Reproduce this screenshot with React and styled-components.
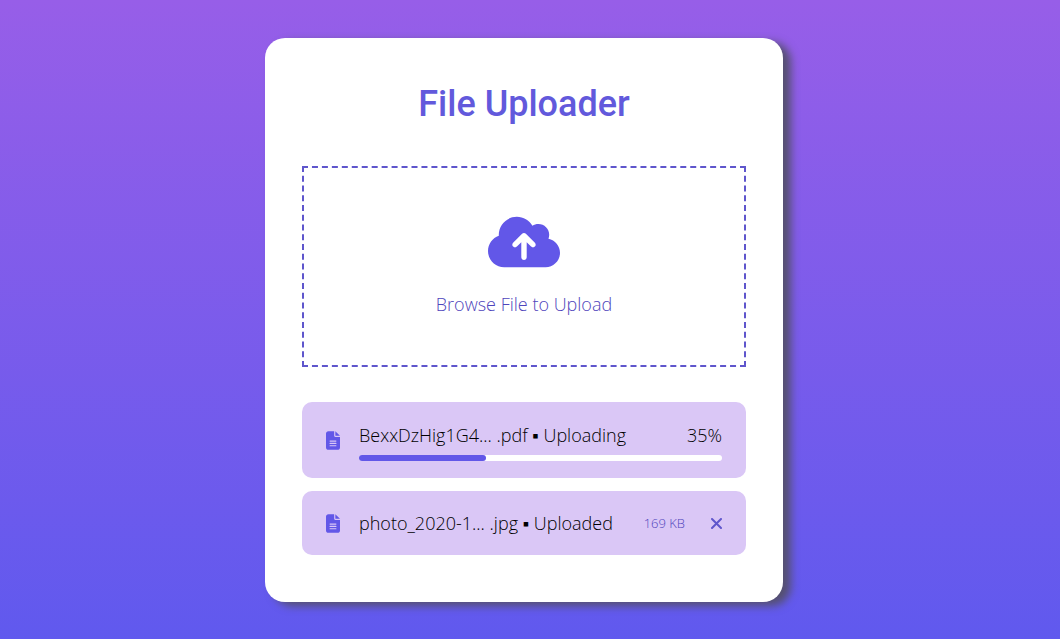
import React from "react";
import styled, { createGlobalStyle } from "styled-components";
import { FaCloudArrowUp, FaFileLines } from "react-icons/fa6";

const accent = "#6257e8";
const textAccent = "#5f56cc";

const GlobalStyle = createGlobalStyle`
  * { box-sizing: border-box; }
  body {
    margin: 0;
    font-family: "Open Sans", "Noto Sans", sans-serif;
  }
`;

const Page = styled.main`
  min-height: 100vh;
  display: flex;
  align-items: center;
  justify-content: center;
  padding: 38px 24px 37px 12px;
  background: linear-gradient(#975ee8, #6059ee);
`;

const Card = styled.section`
  width: 100%;
  max-width: 518px;
  padding: 36px 37px 47px;
  border-radius: 20px;
  background: #fff;
  box-shadow: 8px 4px 8px #555070;
`;

const Title = styled.h1`
  margin: 0 0 32px;
  font-family: Roboto, sans-serif;
  font-size: 36px;
  font-weight: 500;
  line-height: 60px;
  text-align: center;
  color: #6259dc;
`;

const DropZone = styled.button`
  display: flex;
  flex-direction: column;
  align-items: center;
  justify-content: center;
  gap: 17px;
  width: 100%;
  height: 201px;
  padding: 0;
  border: 2px dashed ${textAccent};
  background: transparent;
  color: #4f45bc;
  font-family: inherit;
  font-size: 18px;
  font-weight: 300;
  line-height: 32px;
  cursor: pointer;
`;

const CloudIcon = styled(FaCloudArrowUp)`
  width: 72px;
  height: 58px;
  color: ${accent};
`;

const FileList = styled.ul`
  display: flex;
  flex-direction: column;
  gap: 13px;
  margin: 35px 0 0;
  padding: 0;
  list-style: none;
`;

const FileRow = styled.li`
  display: flex;
  align-items: center;
  gap: 19px;
  padding: ${({ $compact }) => ($compact ? "16px 24px" : "17px 24px")};
  border-radius: 10px;
  background: #dac7f6;
  color: #000;
  font-size: 18px;
  font-weight: 300;
  line-height: 32px;
`;

const FileIcon = styled(FaFileLines)`
  flex: none;
  width: 14px;
  height: 19px;
  color: ${accent};
`;

const Details = styled.div`
  flex: 1;
  min-width: 0;
`;

const Caption = styled.div`
  display: flex;
  justify-content: space-between;
`;

const FileName = styled.span`
  flex: 1;
  white-space: nowrap;
`;

const Track = styled.div`
  height: 6px;
  margin: 4px 0 0;
  border-radius: 3px;
  background: #fff;
`;

const Fill = styled.div`
  height: 100%;
  border-radius: 3px;
  background: ${accent};
`;

const Actions = styled.div`
  display: flex;
  align-items: center;
  gap: 26px;
`;

const Size = styled.span`
  font-size: 13px;
  color: #4f45bc;
`;

const RemoveButton = styled.button`
  display: flex;
  padding: 0;
  border: 0;
  background: transparent;
  color: ${textAccent};
  cursor: pointer;
`;

export default function App() {
  const progress = 35;
  return (
    <>
      <GlobalStyle />
      <Page>
        <Card>
          <Title>File Uploader</Title>
          <DropZone type="button">
            <CloudIcon aria-hidden="true" />
            <span>Browse File to Upload</span>
          </DropZone>
          <FileList>
            <FileRow>
              <FileIcon aria-hidden="true" />
              <Details>
                <Caption>
                  <FileName>BexxDzHig1G4... .pdf ▪ Uploading</FileName>
                  <span>{progress}%</span>
                </Caption>
                <Track role="progressbar" aria-label="Upload progress" aria-valuenow={progress}>
                  <Fill style={{ width: `${progress}%` }} />
                </Track>
              </Details>
            </FileRow>
            <FileRow $compact>
              <FileIcon aria-hidden="true" />
              <FileName>photo_2020-1... .jpg ▪ Uploaded</FileName>
              <Actions>
                <Size>169 KB</Size>
                <RemoveButton type="button" aria-label="Remove file">
                  <svg width="11" height="11" viewBox="0 0 11 11" aria-hidden="true">
                    <path d="M1 1L10 10M10 1L1 10" stroke="currentColor" strokeWidth="2" strokeLinecap="round" />
                  </svg>
                </RemoveButton>
              </Actions>
            </FileRow>
          </FileList>
        </Card>
      </Page>
    </>
  );
}
